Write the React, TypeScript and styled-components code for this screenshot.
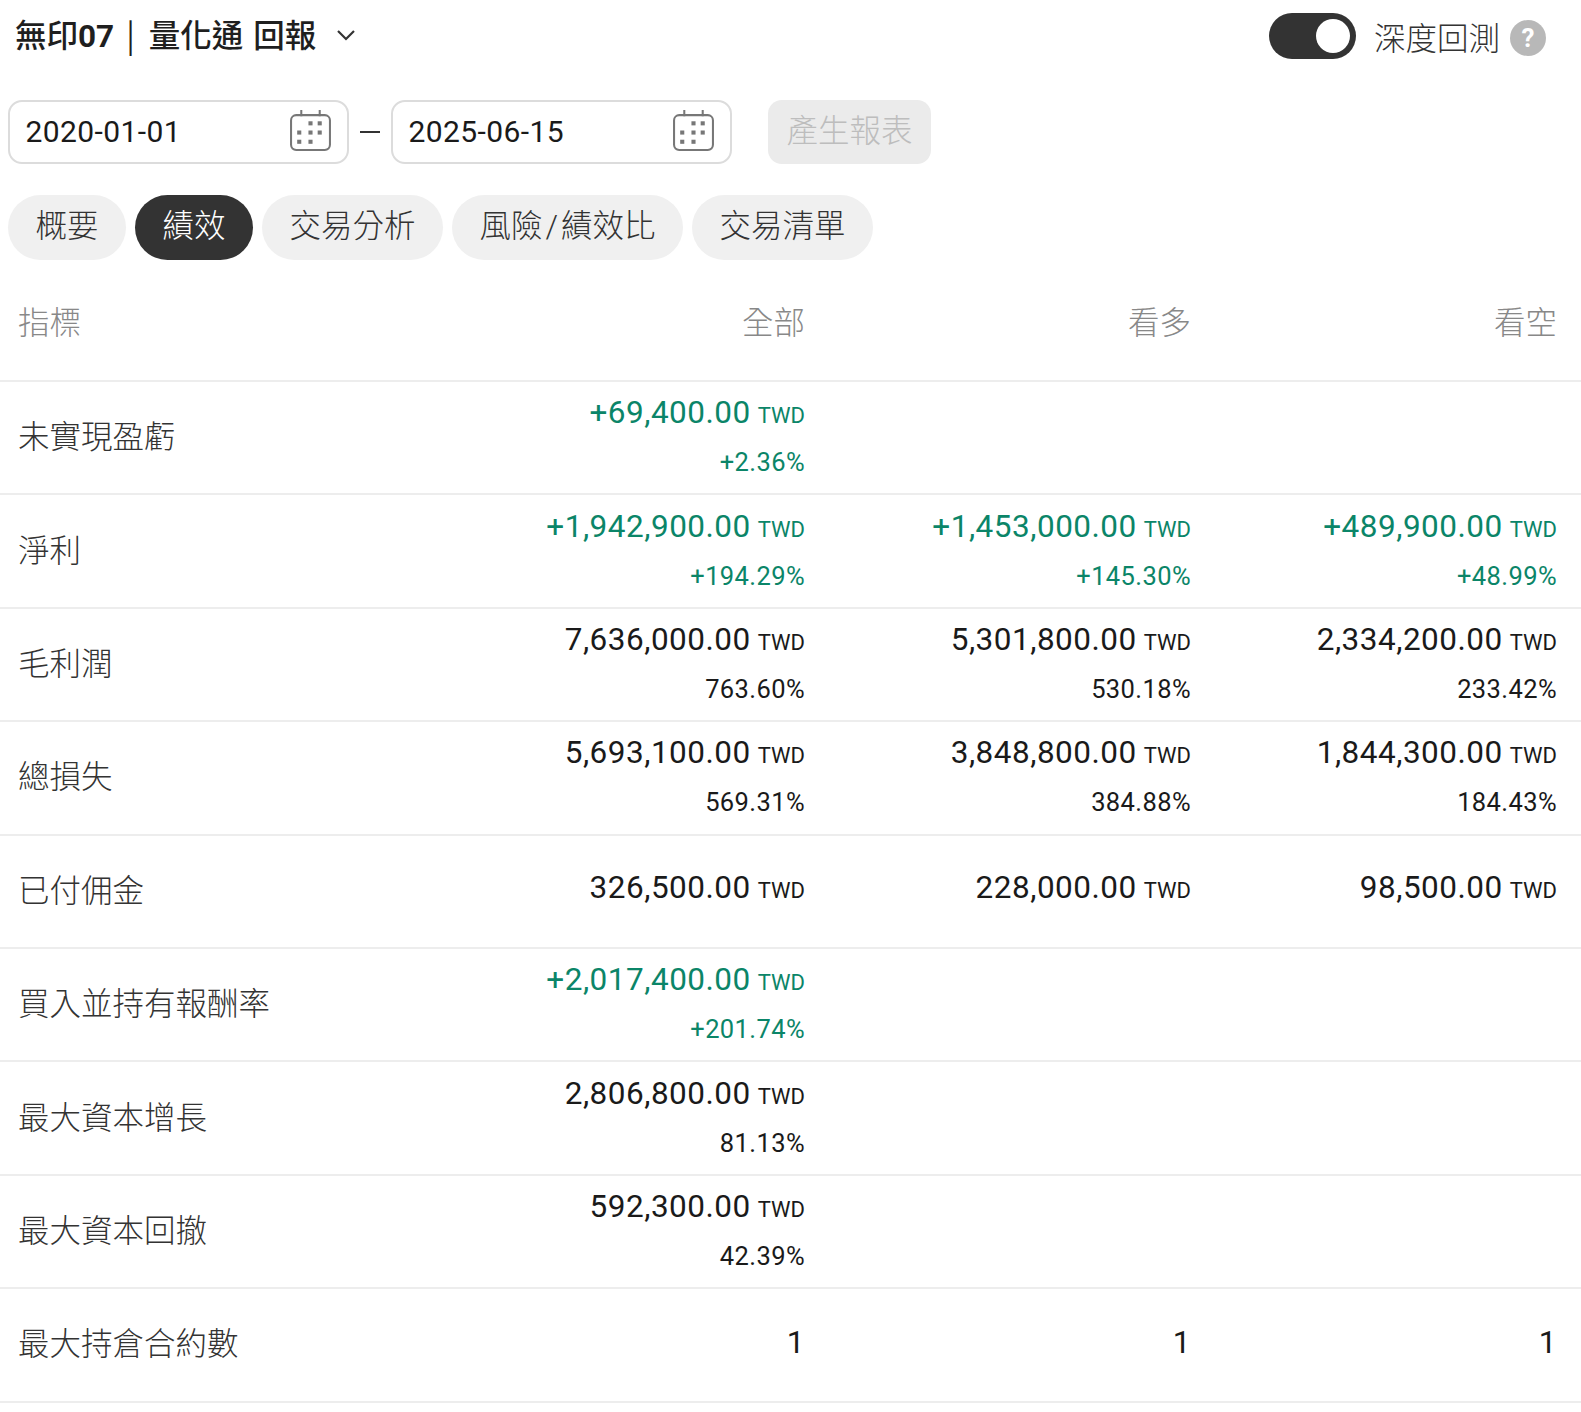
import React from 'react'
import styled, { createGlobalStyle } from 'styled-components'

const GlobalStyle = createGlobalStyle`
  html, body {
    margin: 0;
    padding: 0;
    background: #fff;
    font-family: Roboto, 'Noto Sans CJK TC', sans-serif;
    color: #1a1a1a;
  }
`

const Page = styled.div`
  width: 100%;
  height: 1412px;
  overflow: hidden;
`

const TopBar = styled.div`
  display: flex;
  justify-content: space-between;
  align-items: center;
  height: 73px;
  padding: 0 35px 0 15px;
`

const TitleButton = styled.div`
  display: flex;
  align-items: center;
  gap: 20px;
  font-size: 31.5px;
  font-weight: 500;
  word-spacing: 2px;
  color: #1f1f1f;
  margin-top: -3px;
`

const TitleText = styled.span`
  padding-bottom: 4px;
`

const TitleCode = styled.span`
  font-weight: 700;
`

const TitleBar = styled.span`
  margin: 0 14px 0 12px;
  font-family: 'Noto Sans CJK TC', sans-serif;
  font-weight: 400;
  font-size: 32px;
`

const Switcher = styled.div`
  display: flex;
  align-items: center;
  margin-top: -2px;
`

const SwitchTrack = styled.div`
  display: flex;
  justify-content: flex-end;
  align-items: center;
  width: 87px;
  height: 46px;
  border-radius: 23px;
  background: #333;
  padding: 6px;
  box-sizing: border-box;
`

const SwitchKnob = styled.div`
  width: 34px;
  height: 34px;
  border-radius: 50%;
  background: #fff;
`

const SwitchLabel = styled.span`
  margin-left: 18px;
  font-size: 31.5px;
  font-weight: 300;
  color: #333;
`

const HelpIcon = styled.div`
  display: flex;
  justify-content: center;
  align-items: center;
  width: 36px;
  height: 36px;
  margin-left: 10px;
  margin-top: 4px;
  border-radius: 50%;
  background: #b8b8b8;
  color: #fff;
  font-size: 26px;
  font-weight: 700;
`

const DateRow = styled.div`
  display: flex;
  align-items: center;
  margin-top: 27px;
  padding-left: 8px;
`

const DateField = styled.div`
  display: flex;
  justify-content: space-between;
  align-items: center;
  width: 341px;
  height: 64px;
  box-sizing: border-box;
  padding: 0 15.5px;
  border: 2px solid #dcdcdc;
  border-radius: 14px;
  font-size: 30px;
  letter-spacing: 0.4px;
  color: #1a1a1a;
`

const DateText = styled.span`
  padding-bottom: 2px;
`

const Dash = styled.span`
  width: 20px;
  height: 2px;
  margin: 0 11px;
  background: #333;
`

const GenerateButton = styled.div`
  display: flex;
  justify-content: center;
  align-items: center;
  width: 163px;
  height: 64px;
  box-sizing: border-box;
  padding-bottom: 9px;
  margin-left: 36px;
  border-radius: 14px;
  background: #ebebeb;
  color: #bdbdbd;
  font-size: 31.5px;
  font-weight: 300;
`

const Tabs = styled.div`
  display: flex;
  gap: 9px;
  margin-top: 31px;
  padding-left: 8px;
`

const Tab = styled.div<{ $active?: boolean }>`
  display: flex;
  align-items: center;
  height: 65px;
  box-sizing: border-box;
  padding: 0 27.5px 9px;
  border-radius: 33px;
  font-size: 31.5px;
  font-weight: 300;
  background: ${props => (props.$active ? '#333' : '#f0f0f0')};
  color: ${props => (props.$active ? '#fff' : '#333')};
`

const Slash = styled.span`
  margin: 0 3px;
`

const Row = styled.div<{ $head?: boolean }>`
  display: grid;
  grid-template-columns: 420px 385px 386px 366px;
  align-items: center;
  height: ${props => (props.$head ? '122px' : '113.4px')};
  padding: 0 24px 0 0;
  box-sizing: border-box;
  border-bottom: 2px solid #ededed;
`

const HeadCell = styled.div<{ $left?: boolean }>`
  font-size: 31.5px;
  font-weight: 300;
  color: #888;
  text-align: ${props => (props.$left ? 'left' : 'right')};
  padding-left: ${props => (props.$left ? '18px' : '0')};
`

const Label = styled.div`
  padding: 0 0 7px 18px;
  font-size: 31.5px;
  font-weight: 300;
  color: #333;
`

const ValueCell = styled.div<{ $green?: boolean }>`
  display: flex;
  flex-direction: column;
  align-items: flex-end;
  gap: 8px;
  padding-bottom: 4px;
  color: ${props => (props.$green ? '#0b8568' : '#1a1a1a')};
`

const Amount = styled.div`
  font-size: 31.5px;
  line-height: 42px;
  letter-spacing: 0.5px;
  white-space: nowrap;
`

const Currency = styled.span`
  margin-left: 7px;
  font-size: 22px;
  letter-spacing: 0;
`

const Percent = styled.div`
  font-size: 25.5px;
  line-height: 34px;
  letter-spacing: 0.4px;
  white-space: nowrap;
`

const CalendarSvg = styled.svg`
  width: 43px;
  height: 43px;
  margin-top: -4px;
`

const CalendarIcon = () => (
  <CalendarSvg viewBox="0 0 42 42" fill="none" stroke="#777" strokeWidth="2">
    <rect x="2" y="6" width="38" height="34" rx="5" />
    <path d="M12 1v6M30 1v6" />
    <g fill="#777" stroke="none">
      <rect x="19" y="12" width="4" height="4" />
      <rect x="28" y="12" width="4" height="4" />
      <rect x="8" y="21" width="4" height="4" />
      <rect x="19" y="21" width="4" height="4" />
      <rect x="28" y="21" width="4" height="4" />
      <rect x="8" y="30" width="4" height="4" />
      <rect x="19" y="30" width="4" height="4" />
    </g>
  </CalendarSvg>
)

const Chevron = () => (
  <svg width="20" height="12" viewBox="0 0 20 12" fill="none" stroke="#333" strokeWidth="2.2">
    <path d="M2 2l8 8 8-8" />
  </svg>
)

type Value = { amount: string; percent?: string; green?: boolean; plain?: boolean }

const v = (amount: string, percent?: string): Value => ({ amount, percent, green: amount.startsWith('+') })

const rows: { label: string; values: (Value | null)[] }[] = [
  { label: '未實現盈虧', values: [v('+69,400.00', '+2.36%'), null, null] },
  { label: '淨利', values: [v('+1,942,900.00', '+194.29%'), v('+1,453,000.00', '+145.30%'), v('+489,900.00', '+48.99%')] },
  { label: '毛利潤', values: [v('7,636,000.00', '763.60%'), v('5,301,800.00', '530.18%'), v('2,334,200.00', '233.42%')] },
  { label: '總損失', values: [v('5,693,100.00', '569.31%'), v('3,848,800.00', '384.88%'), v('1,844,300.00', '184.43%')] },
  { label: '已付佣金', values: [v('326,500.00'), v('228,000.00'), v('98,500.00')] },
  { label: '買入並持有報酬率', values: [v('+2,017,400.00', '+201.74%'), null, null] },
  { label: '最大資本增長', values: [v('2,806,800.00', '81.13%'), null, null] },
  { label: '最大資本回撤', values: [v('592,300.00', '42.39%'), null, null] },
  {
    label: '最大持倉合約數',
    values: [
      { amount: '1', plain: true },
      { amount: '1', plain: true },
      { amount: '1', plain: true },
    ],
  },
]

const tabs = ['概要', '績效', '交易分析', '風險/績效比', '交易清單']

export default function App() {
  return (
    <Page>
      <GlobalStyle />
      <TopBar>
        <TitleButton>
          <TitleText>
            無印<TitleCode>07</TitleCode>
            <TitleBar>|</TitleBar>量化通 回報
          </TitleText>
          <Chevron />
        </TitleButton>
        <Switcher>
          <SwitchTrack>
            <SwitchKnob />
          </SwitchTrack>
          <SwitchLabel>深度回測</SwitchLabel>
          <HelpIcon>?</HelpIcon>
        </Switcher>
      </TopBar>
      <DateRow>
        <DateField>
          <DateText>2020-01-01</DateText>
          <CalendarIcon />
        </DateField>
        <Dash />
        <DateField>
          <DateText>2025-06-15</DateText>
          <CalendarIcon />
        </DateField>
        <GenerateButton>產生報表</GenerateButton>
      </DateRow>
      <Tabs>
        {tabs.map(tab => (
          <Tab key={tab} $active={tab === '績效'}>
            {tab.includes('/') ? (
              <span>
                {tab.split('/')[0]}
                <Slash>/</Slash>
                {tab.split('/')[1]}
              </span>
            ) : (
              tab
            )}
          </Tab>
        ))}
      </Tabs>
      <Row $head>
        <HeadCell $left>指標</HeadCell>
        <HeadCell>全部</HeadCell>
        <HeadCell>看多</HeadCell>
        <HeadCell>看空</HeadCell>
      </Row>
      {rows.map(row => (
        <Row key={row.label}>
          <Label>{row.label}</Label>
          {row.values.map((value, i) =>
            value ? (
              <ValueCell key={i} $green={value.green}>
                <Amount>
                  {value.amount}
                  {!value.plain && <Currency>TWD</Currency>}
                </Amount>
                {value.percent && <Percent>{value.percent}</Percent>}
              </ValueCell>
            ) : (
              <div key={i} />
            ),
          )}
        </Row>
      ))}
    </Page>
  )
}
